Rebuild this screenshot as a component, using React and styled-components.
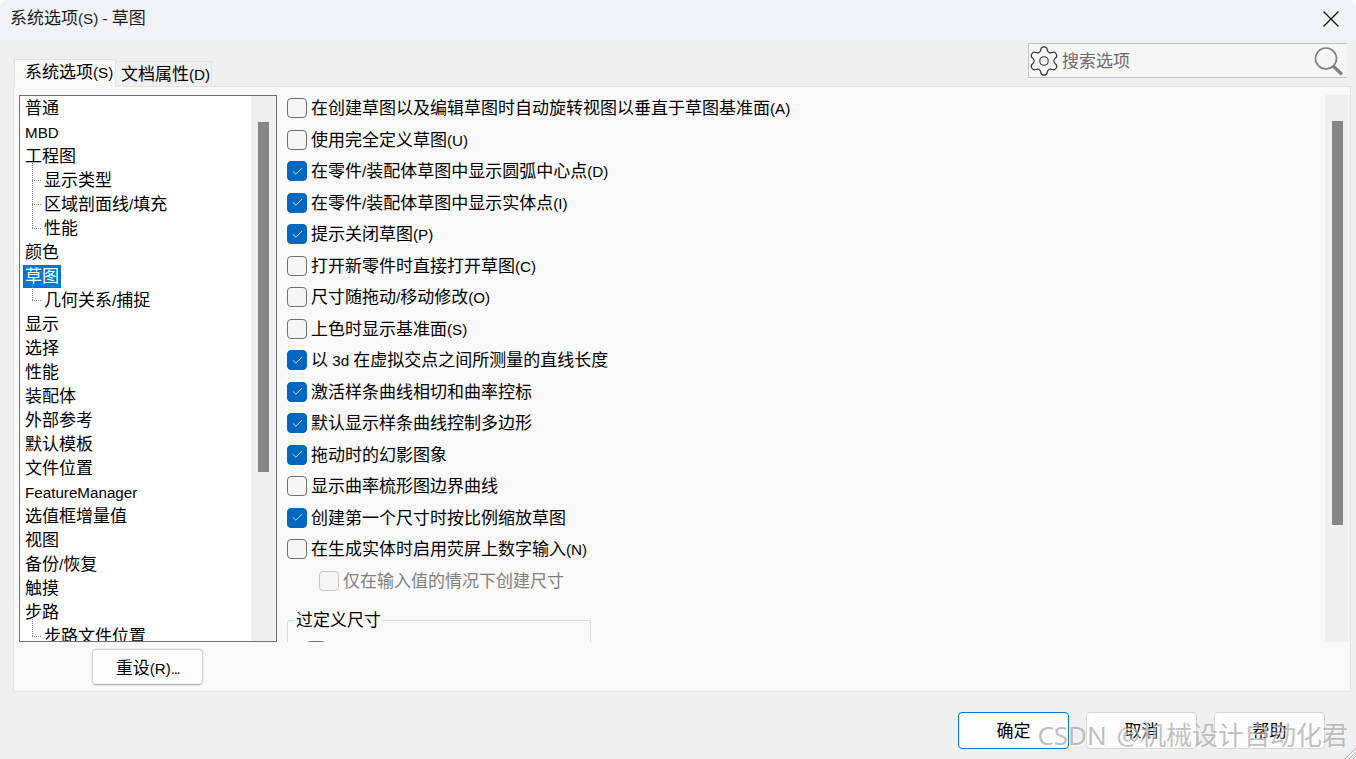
import React from "react";
import styled, { createGlobalStyle } from "styled-components";
import { Settings, Check } from "lucide-react";

const GlobalStyle = createGlobalStyle`
  html, body {
    margin: 0;
    padding: 0;
    background: #ffffff;
  }
  * {
    box-sizing: border-box;
  }
`;

const FONT = `"Noto Sans", "Noto Sans CJK SC", sans-serif`;

const Dialog = styled.div`
  position: relative;
  width: 1356px;
  height: 759px;
  display: flex;
  flex-direction: column;
  background: #f0f0f0;
  border-radius: 8px 8px 0 0;
  overflow: hidden;
  font-family: ${FONT};
  font-size: 17px;
  line-height: 20px;
  color: #000;
`;

const Latin = styled.span`
  font-family: "Liberation Sans", sans-serif;
  font-size: 15.2px;
  line-height: 1;
`;

const Dots = styled(Latin)`
  letter-spacing: -1.4px;
`;

const TitleBar = styled.div`
  height: 40px;
  flex: none;
  display: flex;
  align-items: center;
  justify-content: space-between;
  padding: 0 17px 4px 10px;
  background: #f1f3f8;
  color: #1a1a1a;
`;

const CloseButton = styled.svg`
  display: block;
  margin-top: 1px;
`;

const Header = styled.div`
  height: 46px;
  flex: none;
  display: flex;
  align-items: flex-end;
  justify-content: space-between;
  padding: 0 9px 0 14px;
  position: relative;
  z-index: 1;
`;

const Tabs = styled.div`
  display: flex;
  align-items: flex-end;
  margin-bottom: -1px;
`;

const Tab = styled.div`
  height: ${({ $active }) => ($active ? "28px" : "26px")};
  width: ${({ $active }) => ($active ? "102px" : "97px")};
  padding-left: ${({ $active }) => ($active ? "10px" : "5px")};
  padding-bottom: ${({ $active }) => ($active ? "3px" : "0")};
  display: flex;
  align-items: center;
  background: ${({ $active }) => ($active ? "#f9f9f9" : "#f0f0f0")};
  border: 1px solid #e3e3e3;
  border-bottom: ${({ $active }) => ($active ? "none" : "1px solid #e3e3e3")};
  margin-left: ${({ $active }) => ($active ? "0" : "-1px")};
  white-space: nowrap;
`;

const SearchBox = styled.div`
  width: 319px;
  height: 35px;
  margin-bottom: 8px;
  display: flex;
  align-items: center;
  padding: 0 4px 0 1px;
  background: #f6f6f6;
  border: 1px solid #c2c2c2;
  border-right: none;
`;

const GearWrap = styled.span`
  display: flex;
  margin: 0 -3px;
`;

const SearchText = styled.span`
  margin-left: 4px;
  padding-top: 1px;
  flex: 1;
  color: #6c6c6c;
`;

const Panel = styled.div`
  margin: 0 5px 0 13px;
  height: 606px;
  flex: none;
  display: flex;
  gap: 10px;
  padding: 8px 0 0 5px;
  background: #f9f9f9;
  border: 1px solid #e3e3e3;
`;

const LeftColumn = styled.div`
  width: 258px;
  flex: none;
  display: flex;
  flex-direction: column;
`;

const Tree = styled.div`
  width: 100%;
  height: 547px;
  flex: none;
  display: flex;
  background: #fff;
  border: 1px solid #6f6f6f;
  overflow: hidden;
`;

const TreeList = styled.div`
  flex: 1;
  min-width: 0;
  height: 100%;
  overflow: hidden;
`;

const TreeRow = styled.div`
  height: 24px;
  display: flex;
  align-items: center;
  padding-left: ${({ $level }) => ($level ? "12px" : "3px")};
  white-space: nowrap;
`;

const Connector = styled.span`
  position: relative;
  width: 10px;
  height: 24px;
  flex: none;

  &::before {
    content: "";
    position: absolute;
    left: 0;
    top: -5px;
    height: ${({ $more }) => ($more ? "29px" : "17px")};
    border-left: 1px dotted #808080;
  }

  &::after {
    content: "";
    position: absolute;
    left: 0;
    top: 12px;
    width: 9px;
    border-top: 1px dotted #808080;
  }
`;

const TreeLabel = styled.span`
  padding: 0 2px;
  height: 23px;
  line-height: 22px;
  ${({ $selected }) =>
    $selected
      ? `
    background: #0078d7;
    color: #fff;
    outline: 1px dotted #8a5200;
    outline-offset: -1px;
  `
      : ""}
`;

const Scrollbar = styled.div`
  width: 25px;
  flex: none;
  display: flex;
  justify-content: center;
  align-items: flex-start;
  background: #f0f0f0;
  padding-top: ${({ $offset }) => $offset}px;
`;

const Thumb = styled.div`
  width: 11px;
  height: ${({ $size }) => $size}px;
  background: #868686;
`;

const ResetButton = styled.button`
  width: 111px;
  height: 36px;
  margin: 7px 0 0 73px;
  flex: none;
  font: inherit;
  color: #000;
  padding: 1px 0 0;
  background: #fdfdfd;
  border: 1px solid #d2d2d2;
  border-bottom-color: #b4b4b4;
  border-radius: 4px;
  box-shadow: 0 0 0 1px #f0f0f0;
`;

const OptionsArea = styled.div`
  flex: 1;
  min-width: 0;
  height: 547px;
  display: flex;
`;

const Options = styled.div`
  flex: 1;
  min-width: 0;
  height: 100%;
  overflow: hidden;
  padding-top: 3px;
  display: flex;
  flex-direction: column;
  gap: 11.5px;
`;

const OptionRow = styled.div`
  height: 20px;
  flex: none;
  display: flex;
  align-items: center;
  gap: 4px;
  padding-left: ${({ $indent }) => ($indent ? "32px" : "0")};
  color: ${({ $disabled }) => ($disabled ? "#7f7f7f" : "#000")};
  white-space: nowrap;
`;

const Box = styled.span`
  width: 20px;
  height: 20px;
  flex: none;
  display: flex;
  align-items: center;
  justify-content: center;
  border-radius: 4px;
  background: ${({ $checked }) => ($checked ? "#0067c0" : "#f6f6f6")};
  border: 1px solid
    ${({ $checked, $disabled }) =>
      $checked ? "#0067c0" : $disabled ? "#c6c6c6" : "#707070"};
`;

const GroupBox = styled.fieldset`
  width: 304px;
  flex: none;
  margin: 8px 0 0;
  padding: 11px 0 0 18px;
  height: 80px;
  border: 1px solid #dadada;
  border-radius: 2px;
`;

const GroupTitle = styled.legend`
  margin-left: -11px;
  padding: 0 1px;
  line-height: 20px;
`;

const Footer = styled.div`
  flex: 1;
  display: flex;
  justify-content: flex-end;
  gap: 17px;
  padding: 20px 31px 0 0;
`;

const DialogButton = styled.button`
  width: 111px;
  height: 37px;
  font: inherit;
  color: #000;
  padding: 1px 0 0;
  background: #fdfdfd;
  border: 1px solid ${({ $primary }) => ($primary ? "#0078d4" : "#d6d6d6")};
  border-radius: 4px;
`;

const Watermark = styled.div`
  position: absolute;
  right: 8px;
  top: 717px;
  font-size: 26px;
  line-height: 36px;
  word-spacing: 3px;
  color: rgba(130, 130, 130, 0.5);
  text-shadow: 1px 1px 1px rgba(255, 255, 255, 0.7);
  white-space: nowrap;
`;

const Grip = styled.svg`
  position: absolute;
  right: 0;
  bottom: 0;
`;

const treeItems = [
  { label: "普通" },
  { label: "MBD" },
  { label: "工程图" },
  { label: "显示类型", level: 1, more: true },
  { label: "区域剖面线/填充", level: 1, more: true },
  { label: "性能", level: 1 },
  { label: "颜色" },
  { label: "草图", selected: true },
  { label: "几何关系/捕捉", level: 1 },
  { label: "显示" },
  { label: "选择" },
  { label: "性能" },
  { label: "装配体" },
  { label: "外部参考" },
  { label: "默认模板" },
  { label: "文件位置" },
  { label: "FeatureManager" },
  { label: "选值框增量值" },
  { label: "视图" },
  { label: "备份/恢复" },
  { label: "触摸" },
  { label: "步路" },
  { label: "步路文件位置", level: 1 },
];

const options = [
  { label: "在创建草图以及编辑草图时自动旋转视图以垂直于草图基准面(A)" },
  { label: "使用完全定义草图(U)" },
  { label: "在零件/装配体草图中显示圆弧中心点(D)", checked: true },
  { label: "在零件/装配体草图中显示实体点(I)", checked: true },
  { label: "提示关闭草图(P)", checked: true },
  { label: "打开新零件时直接打开草图(C)" },
  { label: "尺寸随拖动/移动修改(O)" },
  { label: "上色时显示基准面(S)" },
  { label: "以 3d 在虚拟交点之间所测量的直线长度", checked: true },
  { label: "激活样条曲线相切和曲率控标", checked: true },
  { label: "默认显示样条曲线控制多边形", checked: true },
  { label: "拖动时的幻影图象", checked: true },
  { label: "显示曲率梳形图边界曲线" },
  { label: "创建第一个尺寸时按比例缩放草图", checked: true },
  { label: "在生成实体时启用荧屏上数字输入(N)" },
  { label: "仅在输入值的情况下创建尺寸", indent: true, disabled: true },
];

// Latin runs are set smaller than the CJK around them, as in the dialog font
const Mixed = ({ text }) => (
  <span>
    {text.split(/([\x20-\x7e]+)/).map((part, i) =>
      i % 2 ? <Latin key={i}>{part}</Latin> : part
    )}
  </span>
);

const SearchIcon = () => (
  <svg width="30" height="30" viewBox="0 0 30 30" fill="none">
    <circle cx="13" cy="12.5" r="10.5" stroke="#808080" strokeWidth="1.6" />
    <path d="M20.5 20.5L28 27.5" stroke="#808080" strokeWidth="3.2" strokeLinecap="round" />
  </svg>
);

export default function App() {
  return (
    <Dialog>
      <GlobalStyle />
      <TitleBar>
        <Mixed text="系统选项(S) - 草图" />
        <CloseButton width="16" height="16" viewBox="0 0 16 16">
          <path d="M0.5 0.5L15.5 15.5M15.5 0.5L0.5 15.5" stroke="#111" strokeWidth="1.3" />
        </CloseButton>
      </TitleBar>
      <Header>
        <Tabs>
          <Tab $active><Mixed text="系统选项(S)" /></Tab>
          <Tab><Mixed text="文档属性(D)" /></Tab>
        </Tabs>
        <SearchBox>
          <GearWrap>
            <Settings size={34} strokeWidth={0.8} color="#333" />
          </GearWrap>
          <SearchText>搜索选项</SearchText>
          <SearchIcon />
        </SearchBox>
      </Header>
      <Panel>
        <LeftColumn>
          <Tree>
            <TreeList>
              {treeItems.map((item, i) => (
                <TreeRow key={i} $level={item.level}>
                  {item.level ? <Connector $more={item.more} /> : null}
                  <TreeLabel $selected={item.selected}>
                    <Mixed text={item.label} />
                  </TreeLabel>
                </TreeRow>
              ))}
            </TreeList>
            <Scrollbar $offset={26}>
              <Thumb $size={350} />
            </Scrollbar>
          </Tree>
          <ResetButton><Mixed text="重设(R)" /><Dots>...</Dots></ResetButton>
        </LeftColumn>
        <OptionsArea>
          <Options>
            {options.map((opt, i) => (
              <OptionRow key={i} $indent={opt.indent} $disabled={opt.disabled}>
                <Box $checked={opt.checked} $disabled={opt.disabled}>
                  {opt.checked ? <Check size={13} strokeWidth={1.5} color="#fff" /> : null}
                </Box>
                <Mixed text={opt.label} />
              </OptionRow>
            ))}
            <GroupBox>
              <GroupTitle>过定义尺寸</GroupTitle>
              <Box />
            </GroupBox>
          </Options>
          <Scrollbar $offset={26}>
            <Thumb $size={404} />
          </Scrollbar>
        </OptionsArea>
      </Panel>
      <Footer>
        <DialogButton $primary>确定</DialogButton>
        <DialogButton>取消</DialogButton>
        <DialogButton>帮助</DialogButton>
      </Footer>
      <Watermark>CSDN @机械设计自动化君</Watermark>
      <Grip width="14" height="14" viewBox="0 0 14 14">
        <path d="M14 3L3 14M14 7L7 14M14 11L11 14" stroke="#b0b0b0" strokeWidth="1" />
      </Grip>
    </Dialog>
  );
}
